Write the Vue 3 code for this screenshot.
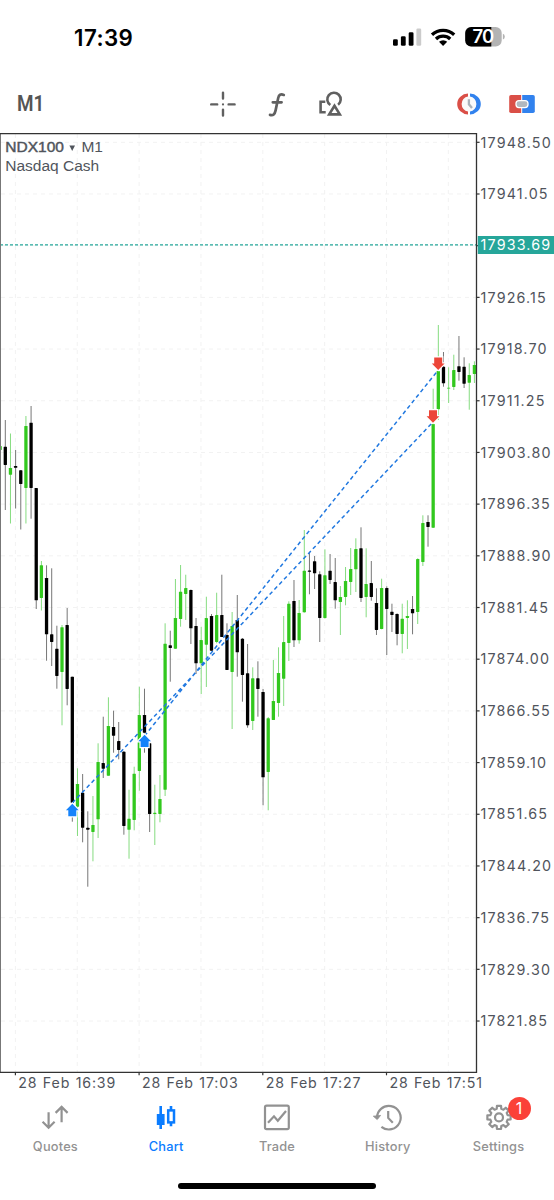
<template>
  <div class="screen">
    <header class="status-bar">
      <span class="clock">17:39</span>
      <svg class="status-icons" width="114" height="24" viewBox="0 0 114 24">
        <rect x="1" y="13.2" width="4.8" height="6.6" rx="1.3" />
        <rect x="8.9" y="10.2" width="4.8" height="9.6" rx="1.3" />
        <rect x="16.7" y="6.2" width="4.8" height="13.6" rx="1.3" />
        <rect x="24.4" y="2.5" width="4.8" height="17.3" rx="1.3" fill="#cbcbcb" />
        <g fill="none" stroke="#000" stroke-width="3.3">
          <path d="M40 8.7A16.3 16.3 0 0 1 62.2 8.7" />
          <path d="M44 13A10.3 10.3 0 0 1 58.2 13" />
        </g>
        <path d="M47 15.8A6 6 0 0 1 55.2 15.8L51.1 20Z" />
        <clipPath id="battery"><rect x="73.2" y="1" width="36.5" height="19.6" rx="6" /></clipPath>
        <g clip-path="url(#battery)">
          <rect x="72" y="0" width="38" height="22" fill="#b3b3b3" />
          <rect x="72" y="0" width="27.3" height="22" />
        </g>
        <path d="M110.9 7.8Q112.8 8.5 112.8 10.7T110.9 13.6Z" fill="#b3b3b3" />
        <text x="91" y="17.1" class="battery-text">70</text>
      </svg>
    </header>

    <nav class="toolbar">
      <span class="timeframe">M1</span>
      <div class="tools">
        <svg width="30" height="30" viewBox="0 0 30 30" fill="none" stroke="#606060" stroke-width="2.4" stroke-linecap="round">
          <path d="M15 3.6V9.6M15 20.6V26.6M3.2 15.4H9.2M20.6 15.4H26.6" />
          <circle cx="15" cy="15.4" r="1.1" fill="#606060" stroke="none" />
        </svg>
        <svg width="30" height="30" viewBox="0 0 30 30" fill="none" stroke="#606060" stroke-width="2.7" stroke-linecap="round">
          <path d="M21.8 5.9C18.6 4.6 16.9 5.8 16.2 9L13.6 21.4C12.8 25.2 11.2 26.8 8 25.9M10.8 13.3H19.6" />
        </svg>
        <svg width="30" height="30" viewBox="0 0 30 30" fill="none" stroke="#606060" stroke-width="2.6">
          <path d="M9.3 12.8H4.6V23.2H9.7" />
          <path d="M14.3 16A6.7 6.7 0 1 1 22.1 15.7" />
          <path d="M18.5 16.8L13.2 25.4H23.8Z" />
        </svg>
      </div>
      <div class="trade-tools">
        <svg width="28" height="28" viewBox="0 0 28 28">
          <circle cx="14" cy="14" r="7.8" fill="#fafafa" />
          <path d="M13 3.6A10.8 10.4 0 0 0 13 24.4V21.5A7.6 7.6 0 0 1 13 6.5Z" fill="#da4f47" />
          <path d="M15 3.6A10.8 10.4 0 0 1 15 24.4V21.5A7.6 7.6 0 0 0 15 6.5Z" fill="#3182ee" />
          <path d="M13.9 9.2V14.3L17 18" fill="none" stroke="#a9b2ba" stroke-width="2.3" />
        </svg>
        <svg width="28" height="28" viewBox="0 0 28 28">
          <path d="M3 5H13.2V23H3Q1.2 23 1.2 21.2V6.8Q1.2 5 3 5Z" fill="#da4f47" />
          <path d="M14.2 5H25Q26.8 5 26.8 6.8V21.2Q26.8 23 25 23H14.2Z" fill="#3182ee" />
          <rect x="8" y="10.6" width="12" height="7" rx="3" fill="#b1b8bf" stroke="#fff" stroke-width="1.3" />
        </svg>
      </div>
    </nav>

    <svg class="chart" width="554" height="962" viewBox="0 133 554 962">
      <defs>
        <clipPath id="plot"><rect x="0" y="134" width="476" height="938" /></clipPath>
      </defs>

      <g class="grid">
        <path v-for="x in gridX" :key="'v' + x" :d="`M${x} 134V1072`" />
        <path v-for="p in prices" :key="'h' + p.y" :d="`M1 ${p.y}H476`" />
      </g>

      <g clip-path="url(#plot)">
        <g v-for="c in candles" :key="c.x" :class="c.up ? 'up' : 'down'">
          <rect class="wick" :x="c.x - 0.5" :y="c.high" width="1" :height="c.low - c.high" />
          <rect class="body" :x="c.x - 1.65" :y="c.top" width="3.3" :height="c.bottom - c.top" rx="0.4" />
        </g>
      </g>

      <g class="deals">
        <path d="M72.3 803L433 422M144.5 736L438.3 370" />
      </g>
      <path v-for="a in buys" :key="a.x" class="arrow buy" :transform="`translate(${a.x} ${a.y})`" :d="arrow" />
      <path v-for="a in sells" :key="a.x" class="arrow sell" :transform="`translate(${a.x} ${a.y}) scale(1 -1)`" :d="arrow" />

      <path class="bid-line" d="M0 244.8H476" />

      <path class="frame-left" d="M0.5 134V1072" />
      <path class="frame" d="M0 133.6H476.5V1072.4H0" />

      <g class="axis">
        <template v-for="p in prices" :key="p.y">
          <path :d="`M477 ${p.y}H479.6`" />
          <text v-if="p.label" class="price" x="480.6" :y="p.y + 5.2">{{ p.label }}</text>
        </template>
        <template v-for="t in times" :key="t.x">
          <path :d="`M${t.x} 1072V1075.3`" />
          <text class="time" :x="t.x + 2.9" y="1087.8">{{ t.label }}</text>
        </template>
      </g>

      <rect x="477.8" y="236" width="76.2" height="18" fill="#26a69a" />
      <text class="bid-text" x="480.6" y="250.2">17933.69</text>

      <text class="symbol symbol-name" x="5.3" y="152.4">NDX100</text>
      <path d="M69.4 145.5H75L72.2 151Z" fill="#50555c" />
      <text class="symbol" x="81.4" y="152.4">M1</text>
      <text class="symbol" x="5.3" y="171.4">Nasdaq Cash</text>
    </svg>

    <nav class="tab-bar">
      <div v-for="tab in tabs" :key="tab" class="tab" :class="{ active: tab === 'Chart' }">
        <div class="tab-icon">
          <svg width="30" height="30" viewBox="0 0 30 30" fill="none" stroke="currentColor" stroke-width="2.2">
            <g v-if="tab === 'Quotes'">
              <path d="M8.6 10.2V25.4M2.6 19.8L8.6 25.8L14.6 19.8" />
              <path d="M21.6 20.2V5.2M15.6 10.9L21.6 4.9L27.6 10.9" />
            </g>
            <g v-else-if="tab === 'Chart'">
              <rect x="5.8" y="12" width="7.8" height="11" fill="currentColor" stroke="none" />
              <path d="M9.7 4V27M20 4V8.5M20 20.5V24.3" stroke-width="2.6" />
              <rect x="17.2" y="8.4" width="5.8" height="12" stroke-width="2.5" />
            </g>
            <g v-else-if="tab === 'Trade'">
              <rect x="3" y="3.6" width="23.8" height="23.6" rx="1.6" />
              <path d="M6 20.8L12 14.3L15.8 18.7L24 9" />
            </g>
            <g v-else-if="tab === 'History'">
              <path d="M4.1 16.5A11.8 11.8 0 1 1 8.4 24.8" />
              <path d="M0.3 14.2L4.2 17.6L7.6 13.4Z" fill="currentColor" stroke-width="0.8" />
              <path d="M15.2 9V15.9L19.8 20.7" />
            </g>
            <g v-else>
              <path :d="gear" stroke-linejoin="round" />
              <circle cx="15" cy="15.4" r="4" />
            </g>
          </svg>
          <span v-if="tab === 'Settings'" class="badge">1</span>
        </div>
        <span class="tab-label">{{ tab }}</span>
      </div>
    </nav>
    <div class="home-indicator"></div>
  </div>
</template>

<script setup>
// Each row: direction, high, low, body top, body bottom
const rows = [
  ['u', 446, 450, 446, 450],
  ['d', 420, 510, 446.7, 465],
  ['u', 433.5, 523.5, 468, 474.7],
  ['d', 450, 508.5, 466, 467.8],
  ['d', 470, 529.5, 470.3, 484],
  ['u', 416, 523.5, 426, 488],
  ['d', 406, 518.7, 422.7, 488],
  ['d', 488, 609, 488, 600.3],
  ['u', 561, 610.5, 565.3, 598],
  ['d', 565.3, 660.7, 578, 634.3],
  ['d', 568.3, 666, 634.3, 642],
  ['d', 625.7, 688.7, 648.7, 676],
  ['u', 625, 725.3, 627.3, 672],
  ['d', 608, 705.3, 625, 689],
  ['d', 676.7, 821.7, 676.7, 802.7],
  ['u', 768.3, 836, 784, 806.7],
  ['d', 774, 842.3, 792.7, 827.7],
  ['d', 811.3, 886.7, 827.8, 829.7],
  ['u', 796, 861.3, 825, 832],
  ['u', 743.3, 838, 762, 819.3],
  ['d', 716.7, 778, 763, 768.7],
  ['u', 697.3, 775.7, 726, 775.7],
  ['d', 710.7, 752.7, 727, 735.7],
  ['d', 722, 759.3, 741, 750],
  ['d', 751, 834.7, 751.7, 826],
  ['u', 789.7, 858.7, 818.7, 829.7],
  ['u', 766.7, 830.3, 773.7, 820],
  ['u', 686.7, 790.7, 715, 771],
  ['d', 688.7, 752.7, 715, 732.7],
  ['d', 742.7, 832, 743.3, 814],
  ['u', 784.7, 845, 812.8, 814],
  ['u', 775, 822.3, 799, 814],
  ['u', 623.3, 796, 643.7, 789.7],
  ['d', 630.7, 681.7, 645.3, 648],
  ['u', 579, 649, 618, 648.7],
  ['u', 565, 626.7, 591.7, 619],
  ['u', 574.7, 620, 588, 594],
  ['d', 589.5, 644, 590, 628.3],
  ['d', 618, 674, 626, 663.3],
  ['u', 626.7, 694, 640, 663.3],
  ['u', 596.7, 687, 618, 644.7],
  ['d', 614, 650.7, 616, 650.7],
  ['u', 592.7, 643.3, 615, 642],
  ['d', 574.7, 637, 615, 637],
  ['d', 623.3, 670, 635, 670],
  ['u', 612, 729, 626, 672],
  ['d', 595, 676.7, 620, 652.3],
  ['d', 638, 701.7, 638.7, 675],
  ['d', 644, 727.7, 673.3, 725.3],
  ['u', 667.3, 730, 678.3, 721],
  ['d', 661.3, 716.7, 678.3, 689],
  ['d', 689, 805.3, 692, 777.3],
  ['u', 717, 810.3, 718.3, 772],
  ['u', 660, 720, 701, 720],
  ['u', 647.3, 716.7, 673, 703],
  ['u', 616, 706, 642, 678.7],
  ['u', 601.3, 661, 603.7, 643],
  ['d', 580, 647, 601, 640.3],
  ['u', 600, 643.7, 613, 640.3],
  ['u', 530, 612.7, 570.7, 612.3],
  ['d', 552.7, 594.3, 570.6, 571.8],
  ['d', 556, 589, 561.3, 573.3],
  ['d', 571.3, 642, 574.3, 618],
  ['u', 549.3, 618.7, 575.3, 618],
  ['d', 554, 584, 570.7, 580],
  ['d', 558, 608.7, 582, 600.3],
  ['u', 586, 635, 597, 602],
  ['u', 567, 605.3, 581, 597],
  ['u', 548, 595, 569, 582],
  ['u', 538.3, 592, 549, 569.3],
  ['d', 527.3, 602, 548.3, 598],
  ['u', 548.3, 617.3, 584, 597],
  ['d', 561, 600.7, 583, 597],
  ['d', 588.3, 635, 603, 630],
  ['u', 578.7, 629.3, 588, 629],
  ['d', 586.3, 655, 588, 609],
  ['d', 603.7, 632, 611.7, 615],
  ['d', 613.3, 645.3, 614, 634],
  ['u', 603.7, 653.3, 618.7, 634],
  ['u', 600.3, 649, 616, 618],
  ['d', 596, 634.3, 609, 613.3],
  ['u', 558.3, 624, 559, 612],
  ['u', 515.3, 566, 523, 562],
  ['d', 515.3, 546.7, 522, 527],
  ['u', 388.7, 528, 424, 527.7],
  ['u', 325, 420, 371, 409.3],
  ['d', 352, 386.7, 366.7, 383.3],
  ['u', 367.3, 403, 387.8, 388.5],
  ['u', 354.7, 390, 370, 387],
  ['d', 336, 380.7, 366.3, 372],
  ['d', 357.3, 388, 366.7, 383.7],
  ['u', 363.3, 409.7, 375, 382.7],
  ['u', 361.3, 383, 365, 374]
]

const candles = rows.map(([dir, high, low, top, bottom], i) => ({
  x: 0.15 + i * 5.155,
  up: dir === 'u',
  high,
  low,
  top,
  bottom
}))

const gridX = Array.from({ length: 8 }, (_, i) => 15.4 + i * 61.85)

// The third level is covered by the bid price tag
const prices = Array.from({ length: 18 }, (_, i) => ({
  y: 142.3 + i * 51.69,
  label: i === 2 ? '' : (17948.5 - i * 7.45).toFixed(2)
}))

const times = ['28 Feb 16:39', '28 Feb 17:03', '28 Feb 17:27', '28 Feb 17:51'].map((label, i) => ({
  x: 15.4 + i * 123.7,
  label
}))

const arrow = 'M0 -6.5L6.4 0H4V5.9H-4V0H-6.4Z'
const buys = [{ x: 72.3, y: 810.3 }, { x: 144.6, y: 741.2 }]
const sells = [{ x: 438.2, y: 363.4 }, { x: 433, y: 416.2 }]

const tabs = ['Quotes', 'Chart', 'Trade', 'History', 'Settings']

// Eight-toothed gear outline
const gear = (() => {
  const points = []
  for (let i = 0; i < 8; i++) {
    const offsets = [[-15, 8.9], [-10, 11.8], [10, 11.8], [15, 8.9]]
    for (const [deg, r] of offsets) {
      const a = ((i * 45 + deg) * Math.PI) / 180
      points.push(`${(15 + r * Math.sin(a)).toFixed(2)} ${(15.4 - r * Math.cos(a)).toFixed(2)}`)
    }
  }
  return `M${points.join('L')}Z`
})()
</script>

<style>
body {
  background: #fff;
}
</style>

<style scoped>
.screen {
  width: 554px;
  height: 1200px;
  display: flex;
  flex-direction: column;
  overflow: hidden;
  background: #fff;
  font-family: Inter, "Liberation Sans", sans-serif;
}

.status-bar {
  height: 75px;
  box-sizing: border-box;
  padding: 26px 48px 0 74px;
  display: flex;
  justify-content: space-between;
  align-items: flex-start;
}

.clock {
  font-size: 22.3px;
  line-height: 24px;
  font-weight: 600;
  letter-spacing: 0.45px;
}

.battery-text {
  font-size: 18.5px;
  font-weight: 600;
  letter-spacing: -0.8px;
  fill: #fff;
  text-anchor: middle;
}

.toolbar {
  height: 58px;
  display: grid;
  grid-template-columns: 208px 192px 1fr;
  align-items: center;
}

.timeframe {
  padding-left: 17px;
  color: #555;
  font-family: Roboto, sans-serif;
  font-size: 21.5px;
  line-height: 28px;
  font-weight: 600;
  transform: scaleX(0.88);
  transform-origin: 17px 50%;
}

.tools {
  display: flex;
  gap: 24px;
}

.trade-tools {
  display: flex;
  gap: 25px;
  padding-left: 54.5px;
}

.chart {
  flex: none;
  display: block;
}

.grid path {
  stroke: #f2f2f2;
  stroke-width: 1;
  stroke-dasharray: 4 4;
}

.up .wick {
  fill: #86dc80;
}

.up .body {
  fill: #32c81e;
}

.down .wick {
  fill: #777;
}

.down .body {
  fill: #000;
}

.deals path {
  fill: none;
  stroke: #2078e0;
  stroke-width: 1.5;
  stroke-dasharray: 4 3;
}

.arrow {
  stroke: #fff;
  stroke-width: 2.4;
  paint-order: stroke;
}

.buy {
  fill: #1583fb;
}

.sell {
  fill: #ec4638;
}

.bid-line {
  stroke: #26a69a;
  stroke-width: 1.3;
  stroke-dasharray: 3 2;
}

.frame {
  fill: none;
  stroke: #333;
  stroke-width: 1.3;
}

.frame-left {
  stroke: #777;
}

.axis path {
  stroke: #333;
  stroke-width: 1.2;
}

.price,
.time,
.bid-text {
  font-size: 14.3px;
  letter-spacing: 1.15px;
  fill: #50545c;
}

.time {
  font-size: 14.2px;
  letter-spacing: 0.85px;
  word-spacing: 0.6px;
}

.bid-text {
  fill: #fff;
}

.symbol {
  font-family: "Liberation Sans", Arial, sans-serif;
  font-size: 15.5px;
  fill: #50555c;
}

.symbol-name {
  stroke: #50555c;
  stroke-width: 0.45;
}

.tab-bar {
  height: 88px;
  flex: none;
  display: grid;
  grid-template-columns: repeat(5, 1fr);
}

.tab {
  display: flex;
  flex-direction: column;
  align-items: center;
  padding-top: 7px;
  color: #929292;
}

.tab.active {
  color: #0a7cff;
}

.tab-icon {
  position: relative;
  height: 30px;
}

.tab-label {
  margin-top: 5.5px;
  font-size: 12.8px;
  line-height: 18px;
  font-weight: 500;
  letter-spacing: 0.2px;
}

.badge {
  position: absolute;
  left: 24px;
  top: -5px;
  width: 23px;
  height: 23px;
  border-radius: 50%;
  background: #fb4138;
  color: #fff;
  font-size: 16px;
  line-height: 23px;
  text-align: center;
}

.home-indicator {
  width: 198px;
  height: 6px;
  flex: none;
  align-self: center;
  border-radius: 3px;
  background: #000;
}
</style>
